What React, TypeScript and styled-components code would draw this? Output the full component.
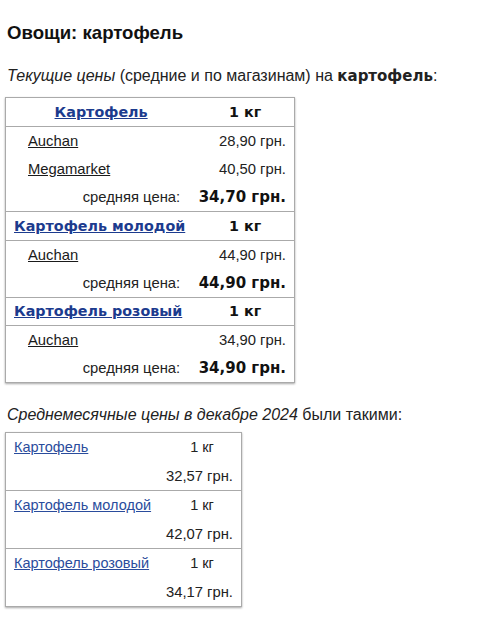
import { createGlobalStyle, styled } from "styled-components";

const GlobalStyle = createGlobalStyle`
  html, body {
    margin: 0;
    padding: 0;
    background: #fff;
  }
  body {
    font-family: "Liberation Sans", Arial, sans-serif;
    color: #111;
  }
`;

const Page = styled.div`
  padding: 22px 7px 10px 7px;
  width: 493px;
  box-sizing: border-box;
`;

const Title = styled.h1`
  margin: 0 0 23px 0;
  font-size: 18.6px;
  font-weight: 700;
  color: #111;
`;

const Lead = styled.p<{ $gap: number }>`
  margin: 0 0 ${({ $gap }) => $gap}px 0;
  font-size: 16px;
  color: #222;

  em {
    font-style: italic;
  }
  strong {
    font-family: "DejaVu Sans", Verdana, sans-serif;
    font-size: 15px;
  }
`;

const PriceTable = styled.table<{ $width: number }>`
  width: ${({ $width }) => $width}px;
  margin-left: -2px;
  border-collapse: collapse;
  border: 1px solid #aaa;
  box-shadow: 0 1px 2px rgba(0, 0, 0, 0.35);
  font-size: 14.8px;
  margin-bottom: 23px;
`;

const Row = styled.tr<{ $sep?: boolean }>`
  height: 28.5px;
  border-top: ${({ $sep }) => ($sep ? "1px solid #aaa" : "none")};
`;

const HeadName = styled.td<{ $centered?: boolean }>`
  padding: 0 8px;
  text-align: ${({ $centered }) => ($centered ? "center" : "left")};
  font-family: "DejaVu Sans", Verdana, sans-serif;
  font-weight: 700;
  font-size: 14.3px;
`;

const HeadUnit = styled.td`
  text-align: center;
  font-family: "DejaVu Sans", Verdana, sans-serif;
  font-weight: 700;
  font-size: 14.3px;
  color: #111;
`;

const ProductLink = styled.a`
  color: #1c3b8e;
  text-decoration: underline;
`;

const StoreCell = styled.td`
  padding: 0 0 0 22px;
`;

const StoreLink = styled.a`
  color: #1a1a1a;
  text-decoration: underline;
`;

const PriceCell = styled.td`
  text-align: right;
  padding-right: 8px;
  color: #222;
`;

const AvgLabel = styled.td`
  text-align: right;
  padding-right: 16px;
  color: #222;
`;

const AvgPrice = styled.td`
  text-align: right;
  padding-right: 8px;
  font-family: "DejaVu Sans", Verdana, sans-serif;
  font-weight: 700;
  font-size: 15px;
  color: #111;
`;

const MonthRow = styled.tr<{ $sep?: boolean }>`
  height: 29px;
  border-top: ${({ $sep }) => ($sep ? "1px solid #aaa" : "none")};
`;

const MonthName = styled.td`
  padding: 0 8px;
  font-size: 14.5px;
`;

const MonthLink = styled.a`
  color: #2a4c9c;
  text-decoration: underline;
`;

const MonthUnit = styled.td`
  text-align: center;
  font-size: 14.5px;
  color: #222;
`;

const MonthPrice = styled.td`
  text-align: right;
  padding-right: 8px;
  font-size: 14.8px;
  color: #222;
`;

type Store = { name: string; price: string };
type Product = { name: string; stores: Store[]; avg: string };

const current: Product[] = [
  {
    name: "Картофель",
    stores: [
      { name: "Auchan", price: "28,90 грн." },
      { name: "Megamarket", price: "40,50 грн." },
    ],
    avg: "34,70 грн.",
  },
  {
    name: "Картофель молодой",
    stores: [{ name: "Auchan", price: "44,90 грн." }],
    avg: "44,90 грн.",
  },
  {
    name: "Картофель розовый",
    stores: [{ name: "Auchan", price: "34,90 грн." }],
    avg: "34,90 грн.",
  },
];

const monthly = [
  { name: "Картофель", price: "32,57 грн." },
  { name: "Картофель молодой", price: "42,07 грн." },
  { name: "Картофель розовый", price: "34,17 грн." },
];

export default function App() {
  return (
    <Page>
      <GlobalStyle />
      <Title>Овощи: картофель</Title>
      <Lead $gap={12}>
        <em>Текущие цены</em> (средние и по магазинам) на{" "}
        <strong>картофель</strong>:
      </Lead>
      <PriceTable $width={290}>
        <tbody>
          {current.map((p, i) => [
            <Row key={p.name} $sep={i > 0}>
              <HeadName $centered={i === 0}>
                <ProductLink href="#">{p.name}</ProductLink>
              </HeadName>
              <HeadUnit>1 кг</HeadUnit>
            </Row>,
            ...p.stores.map((s, j) => (
              <Row key={p.name + s.name} $sep={j === 0}>
                <StoreCell>
                  <StoreLink href="#">{s.name}</StoreLink>
                </StoreCell>
                <PriceCell>{s.price}</PriceCell>
              </Row>
            )),
            <Row key={p.name + "avg"}>
              <AvgLabel>средняя цена:</AvgLabel>
              <AvgPrice>{p.avg}</AvgPrice>
            </Row>,
          ])}
        </tbody>
      </PriceTable>
      <Lead $gap={8}>
        <em>Среднемесячные цены в декабре 2024</em> были такими:
      </Lead>
      <PriceTable $width={237}>
        <tbody>
          {monthly.map((m, i) => [
            <MonthRow key={m.name} $sep={i > 0}>
              <MonthName>
                <MonthLink href="#">{m.name}</MonthLink>
              </MonthName>
              <MonthUnit>1 кг</MonthUnit>
            </MonthRow>,
            <MonthRow key={m.name + "p"}>
              <MonthName />
              <MonthPrice>{m.price}</MonthPrice>
            </MonthRow>,
          ])}
        </tbody>
      </PriceTable>
    </Page>
  );
}
